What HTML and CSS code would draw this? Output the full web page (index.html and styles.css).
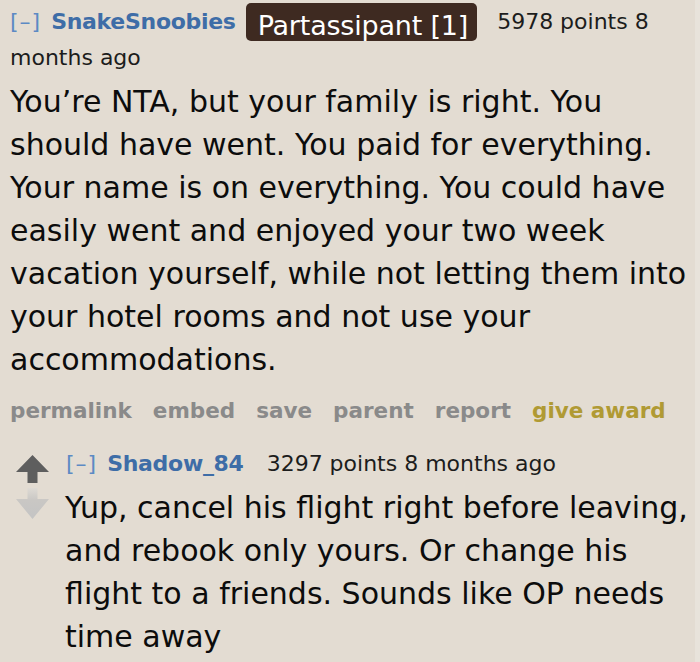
FILE: index.html
```html
<!DOCTYPE html>
<html>
<head>
<meta charset="utf-8">
<link rel="stylesheet" href="styles.css">
</head>
<body>
<div class="page">
  <div class="comment">
    <p class="tagline"><a class="expand">[–]</a> <a class="author">SnakeSnoobies</a> <span class="flair">Partassipant [1]</span> <span class="score">5978 points</span> <span class="time">8</span> <span class="time">months</span> <span class="time">ago</span></p>
    <div class="md">
      <p>You’re NTA, but your family is right. You should have went. You paid for everything. Your name is on everything. You could have easily went and enjoyed your two week vacation yourself, while not letting them into your hotel rooms and not use your accommodations.</p>
    </div>
    <ul class="buttons">
      <li>permalink</li>
      <li>embed</li>
      <li>save</li>
      <li>parent</li>
      <li>report</li>
      <li class="award">give award</li>
    </ul>
    <div class="child">
      <div class="votes">
        <svg class="arrow" width="33" height="28" viewBox="0 0 33 28">
          <path d="M16.5 0 L33 17 L21.5 17 L21.5 28 L11.5 28 L11.5 17 L0 17 Z" fill="#5e5e5e"/>
        </svg>
        <svg class="arrow" width="33" height="31" viewBox="0 0 33 31">
          <defs>
            <linearGradient id="dg" x1="0" y1="0" x2="0" y2="1">
              <stop offset="0" stop-color="#dedad4"/>
              <stop offset="0.4" stop-color="#c9c7c4"/>
              <stop offset="1" stop-color="#c4c4c4"/>
            </linearGradient>
          </defs>
          <path d="M11.5 0 L21.5 0 L21.5 11 L33 11 L16.5 31 L0 11 L11.5 11 Z" fill="url(#dg)"/>
        </svg>
      </div>
      <div class="entry">
        <p class="tagline"><a class="expand">[–]</a> <a class="author">Shadow_84</a> <span class="score">3297 points</span> <span class="time">8 months ago</span></p>
        <div class="md">
          <p>Yup, cancel his flight right before leaving, and rebook only yours. Or change his flight to a friends. Sounds like OP needs time away</p>
        </div>
      </div>
    </div>
  </div>
</div>
</body>
</html>
```
FILE: styles.css
```css
html, body {
  margin: 0;
  padding: 0;
}
body {
  background: linear-gradient(to right, #e3dcd2 695px, #e8e3db 695px);
  font-family: "DejaVu Sans", Verdana, sans-serif;
  color: #111;
  width: 700px;
  height: 662px;
  overflow: hidden;
}
.page {
  padding: 0 8px 0 10px;
}
p { margin: 0; }
.tagline {
  font-size: 22px;
  line-height: 36px;
  color: #1c1c1c;
  padding-top: 4px;
}
.expand {
  color: #5c8ac4;
  letter-spacing: 1px;
  margin-right: 3px;
}
.author {
  color: #3e6da7;
  font-weight: bold;
  letter-spacing: -0.3px;
  margin-right: 3px;
}
.flair {
  background: #3e2a21;
  color: #fff;
  font-size: 27px;
  line-height: 20px;
  letter-spacing: -0.2px;
  padding: 7px 9px 0 12px;
  border-radius: 5px;
  margin-right: 13px;
  vertical-align: -6px;
}
.md {
  font-size: 30px;
  line-height: 43px;
  color: #0c0c0c;
  margin-top: 4px;
}
.buttons {
  list-style: none;
  margin: 15px 0 0 0;
  padding: 0;
  display: flex;
  gap: 21px;
  font-size: 21.5px;
  font-weight: bold;
  color: #8a8a8a;
  line-height: 30px;
}
.buttons .award {
  color: #b09a34;
}
.child {
  display: flex;
  margin-top: 20px;
  margin-left: 6px;
}
.votes {
  width: 49px;
  flex: none;
  display: flex;
  flex-direction: column;
  gap: 5px;
  padding-top: 9px;
}
.arrow { display: block; }
.entry {
  flex: 1;
}
.child .tagline {
  padding-top: 0;
  margin-left: 1px;
}
.child .author {
  margin-right: 16px;
}
.child .md {
  margin-top: 4px;
}
```
